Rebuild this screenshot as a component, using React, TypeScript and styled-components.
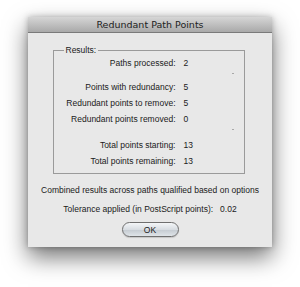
import React from "react";
import styled, { createGlobalStyle } from "styled-components";

const GlobalStyle = createGlobalStyle`
  html, body {
    margin: 0;
    padding: 0;
    background: #ffffff;
  }
  body {
    font-family: "Liberation Sans", Arial, sans-serif;
  }
`;

type Result = { label: string; value: string; gapBefore?: number };

const results: Result[] = [
  { label: "Paths processed:", value: "2" },
  { label: "Points with redundancy:", value: "5", gapBefore: 8 },
  { label: "Redundant points to remove:", value: "5" },
  { label: "Redundant points removed:", value: "0" },
  { label: "Total points starting:", value: "13", gapBefore: 10 },
  { label: "Total points remaining:", value: "13" },
];

const App = () => {
  return (
    <>
      <GlobalStyle />
      <Page>
        <Window>
          <TitleBar>Redundant Path Points</TitleBar>
          <Body>
            <Group>
              <Legend>Results:</Legend>
              {results.map((r) => (
                <React.Fragment key={r.label}>
                  {r.gapBefore ? (
                    <Spacer $h={r.gapBefore}>
                      <Tick />
                    </Spacer>
                  ) : null}
                  <Row>
                    <Label>{r.label}</Label>
                    <Value>{r.value}</Value>
                  </Row>
                </React.Fragment>
              ))}
            </Group>
            <Note>Combined results across paths qualified based on options</Note>
            <Tolerance>
              Tolerance applied (in PostScript points):<Num>0.02</Num>
            </Tolerance>
            <Button>OK</Button>
          </Body>
        </Window>
      </Page>
    </>
  );
};

export default App;

const Page = styled.div`
  width: 300px;
  height: 287px;
  box-sizing: border-box;
  padding: 17px 0 0 28px;
  overflow: hidden;
`;

const Window = styled.div`
  width: 244px;
  height: 230px;
  background: #e8e8e8;
  display: flex;
  flex-direction: column;
  box-shadow: 0 10px 22px rgba(0, 0, 0, 0.55), 0 0 6px rgba(0, 0, 0, 0.25);
`;

const TitleBar = styled.div`
  height: 15px;
  flex: none;
  border-bottom: 1px solid #7a7a7a;
  background: linear-gradient(to bottom, #d6d6d6, #a9a9a9);
  color: #222222;
  font-family: "DejaVu Sans", "Liberation Sans", sans-serif;
  font-size: 9.5px;
  line-height: 15px;
  text-align: center;
`;

const Body = styled.div`
  flex: 1;
  display: flex;
  flex-direction: column;
  align-items: center;
  padding-top: 12px;
`;

const Group = styled.fieldset`
  width: 192px;
  box-sizing: border-box;
  margin: 0 3px 0 0;
  padding: 0 0 4px 0;
  border: 1px solid #9a9a9a;
  display: flex;
  flex-direction: column;
  font-size: 8.5px;
  color: #1a1a1a;
`;

const Legend = styled.legend`
  margin-left: 10px;
  padding: 0 2px;
  font-size: 8.5px;
  line-height: 10px;
  color: #1a1a1a;
`;

const Row = styled.div`
  height: 16px;
  display: grid;
  grid-template-columns: 122px auto;
  column-gap: 8px;
  align-items: center;
`;

const Label = styled.span`
  text-align: right;
`;

const Value = styled.span``;

const Spacer = styled.div<{ $h: number }>`
  height: ${(p) => p.$h}px;
  position: relative;
`;

const Tick = styled.div`
  position: absolute;
  left: 178px;
  top: 2px;
  width: 2px;
  height: 1px;
  background: #a8a8a8;
`;

const Note = styled.div`
  margin-top: 11px;
  font-size: 8.5px;
  line-height: 10px;
  color: #1a1a1a;
`;

const Tolerance = styled.div`
  margin-top: 9px;
  font-size: 8.5px;
  line-height: 10px;
  color: #1a1a1a;
`;

const Num = styled.span`
  margin-left: 7px;
`;

const Button = styled.button`
  margin-top: 8px;
  width: 57px;
  height: 15px;
  padding: 0;
  border: 1px solid #6f6f6f;
  border-radius: 8px;
  background: linear-gradient(to bottom, #f4f6f8 0%, #d8dde2 50%, #c4cad0 51%, #dfe4e8 100%);
  font-family: "Liberation Sans", Arial, sans-serif;
  font-size: 8.5px;
  color: #1a1a1a;
  box-shadow: 0 1px 1px rgba(0, 0, 0, 0.15);
`;
